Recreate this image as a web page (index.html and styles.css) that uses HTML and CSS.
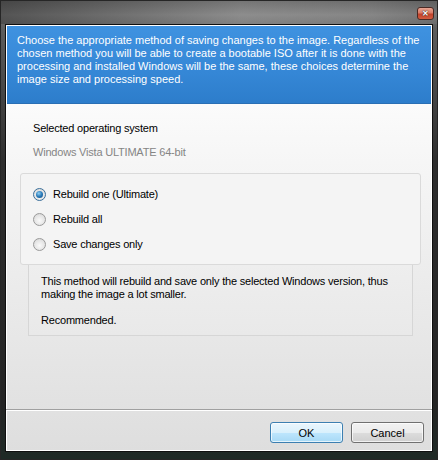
FILE: index.html
```html
<!DOCTYPE html>
<html lang="en">
<head>
  <meta charset="UTF-8">
  <title>Save changes</title>
  <link rel="stylesheet" href="styles.css">
</head>
<body>

  <!-- Dialog window -->
  <div class="window">
    <div class="titlebar">
      <span class="close-btn">&#x2715;</span>
    </div>

    <div class="client">
      <!-- Blue info banner -->
      <div class="banner">
        Choose the appropriate method of saving changes to the image. Regardless of the<br>
        chosen method you will be able to create a bootable ISO after it is done with the<br>
        processing and installed Windows will be the same, these choices determine the<br>
        image size and processing speed.
      </div>

      <div class="main">
        <p class="os-label">Selected operating system</p>
        <p class="os-value">Windows Vista ULTIMATE 64-bit</p>

        <div class="options">
          <div class="option"><span class="radio checked"></span>Rebuild one (Ultimate)</div>
          <div class="option"><span class="radio"></span>Rebuild all</div>
          <div class="option"><span class="radio"></span>Save changes only</div>
        </div>

        <div class="description">
          <p>This method will rebuild and save only the selected Windows version, thus<br>
          making the image a lot smaller.</p>
          <p>Recommended.</p>
        </div>
      </div>

      <div class="footer">
        <button class="btn btn-default">OK</button>
        <button class="btn">Cancel</button>
      </div>
    </div>
  </div>

</body>
</html>
```

FILE: styles.css
```css
/* Reset */
* {
  margin: 0;
  padding: 0;
  box-sizing: border-box;
}

body {
  font-family: "Liberation Sans", Arial, sans-serif;
  font-size: 11px;
  line-height: 13px;
  color: #000;
  background-color: #1e1e1e;
}

/* Outer glass frame */
.window {
  width: 438px;
  height: 460px;
  border: 1px solid #262626;
  padding: 0 4px 7px 4px;
  display: flex;
  flex-direction: column;
  background: linear-gradient(180deg, #7a7a7a 0, #5c5c5c 30px, #2e2e2e 160px, #242424 400px, #1f2a26 100%);
}

.titlebar {
  height: 23px;
  margin: 0 -4px;
  position: relative;
  background: linear-gradient(90deg, rgba(40, 40, 40, 0.55) 0, rgba(150, 150, 150, 0.25) 55%, rgba(120, 120, 120, 0.2) 85%, rgba(70, 70, 70, 0.3) 100%),
              linear-gradient(180deg, #6a6a6a 0, #8a8a8a 60%, #7a7a7a 100%);
}

/* Red close button, sits over the title bar */
.close-btn {
  position: absolute;
  right: 3px;
  top: 6px;
  width: 17px;
  height: 13px;
  border: 1px solid #4a2a24;
  border-radius: 3px;
  background: linear-gradient(180deg, #e8a593 0, #d87a65 45%, #c0412a 55%, #d45c40 100%);
  color: #fff;
  font-size: 8px;
  font-weight: bold;
  line-height: 11px;
  text-align: center;
  text-shadow: 0 0 1px #3a1a10, 0 0 1px #3a1a10;
}

/* Inner client area */
.client {
  flex: 1;
  display: flex;
  flex-direction: column;
  border: 1px solid #101010;
  box-shadow: inset 0 0 0 1px #fff;
  padding: 1px;
  background: linear-gradient(180deg, #fbfbfb 80px, #ececec 250px, #dedede 100%);
}

.banner {
  height: 78px;
  padding: 8px 10px 0 10px;
  color: #fff;
  white-space: nowrap;
  background: linear-gradient(180deg, #3f92e0 0, #3587d6 60%, #2d7dcb 100%);
  border-bottom: 1px solid #2a6fb4;
}

.main {
  flex: 1;
  padding-top: 18px;
  letter-spacing: -0.2px;
}

.os-label {
  padding-left: 26px;
}

.os-value {
  padding-left: 26px;
  margin-top: 11px;
  color: #858585;
}

/* Radio group panel */
.options {
  margin: 14px 10px 0 13px;
  padding: 8px 12px 7px 12px;
  background-color: #f4f4f4;
  border: 1px solid #dadada;
  border-radius: 3px;
}

.option {
  height: 25px;
  display: flex;
  align-items: center;
}

.radio {
  width: 13px;
  height: 13px;
  margin-right: 7px;
  border-radius: 50%;
  border: 1px solid #9a9a9a;
  background: radial-gradient(circle at 50% 60%, #fafafa 0, #e4e4e4 60%, #cfcfcf 100%);
  display: flex;
  align-items: center;
  justify-content: center;
}

.radio.checked {
  border-color: #3a6f9a;
}

.radio.checked::after {
  content: "";
  width: 7px;
  height: 7px;
  border-radius: 50%;
  background: radial-gradient(circle at 40% 35%, #8fd0f5 0, #2a7ab8 50%, #0f4a80 100%);
}

/* Description under the selected option */
.description {
  margin: 0 18px 0 21px;
  padding: 10px 12px 8px 12px;
  white-space: nowrap;
  border: 1px solid #d6d6d6;
  border-top: none;
  background: linear-gradient(180deg, #eeeeee 0, #e9e9e9 100%);
}

.description p + p {
  margin-top: 13px;
}

/* Bottom button row */
.footer {
  height: 42px;
  margin: 0 -1px -1px -1px;
  padding: 12px 8px 8px 8px;
  display: flex;
  justify-content: flex-end;
  gap: 8px;
  border-top: 1px solid #a0a0a0;
  box-shadow: inset 0 1px 0 #fff;
}

.btn {
  width: 73px;
  height: 21px;
  font-family: "Liberation Sans", Arial, sans-serif;
  font-size: 11px;
  color: #000;
  border: 1px solid #707070;
  border-radius: 3px;
  background: linear-gradient(180deg, #f2f2f2 0, #ebebeb 50%, #dddddd 50%, #cfcfcf 100%);
  box-shadow: inset 0 0 0 1px rgba(255, 255, 255, 0.7);
}

.btn-default {
  border-color: #3c7fb1;
  background: linear-gradient(180deg, #eaf6fd 0, #d9f0fc 50%, #bee6fd 50%, #a7d9f5 100%);
}
```
